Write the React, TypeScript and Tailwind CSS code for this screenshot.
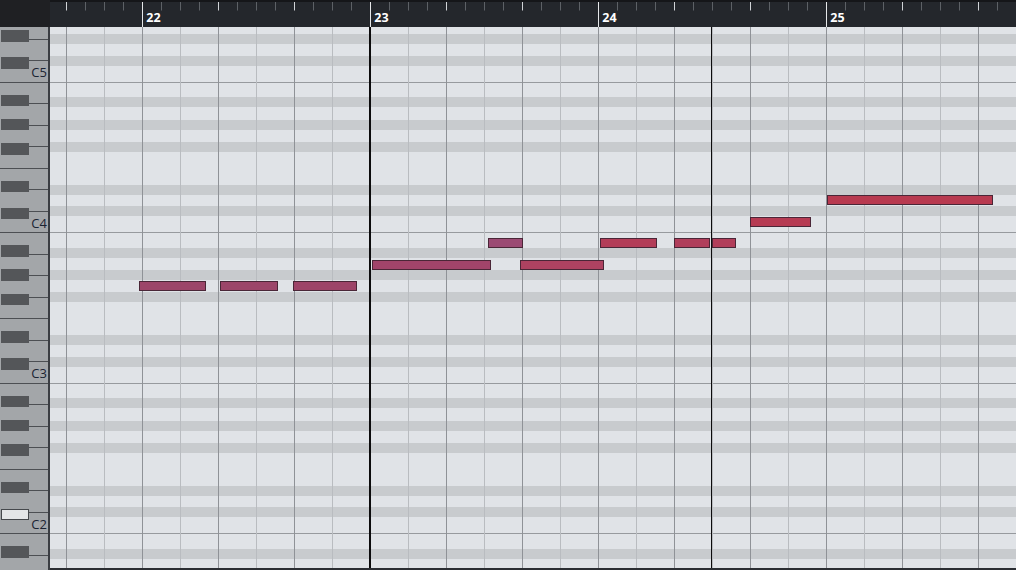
import React from 'react';
import clsx from 'clsx';

// piano roll: 5 octaves visible (C5 .. C1), one octave = 150.5px
const OCTAVES = [5, 4, 3, 2, 1];
const BARS = [21, 22, 23, 24, 25];

// grid rows of one octave, top (B) to bottom (C)
const gridRows = [
  { h: 'h-[14.5px]', dark: false }, // B
  { h: 'h-[10px]', dark: true }, // A#
  { h: 'h-[12.5px]', dark: false }, // A
  { h: 'h-[10px]', dark: true }, // G#
  { h: 'h-[12px]', dark: false }, // G
  { h: 'h-[10px]', dark: true }, // F#
  { h: 'h-[33px]', dark: false }, // F + E
  { h: 'h-[10px]', dark: true }, // D#
  { h: 'h-[11.5px]', dark: false }, // D
  { h: 'h-[10px]', dark: true }, // C#
  { h: 'h-[17px]', dark: false, line: true }, // C
];

// white keys top to bottom; full = the line under the key crosses the whole key
const whiteKeys = [
  { name: 'B', full: false },
  { name: 'A', full: false },
  { name: 'G', full: false },
  { name: 'F', full: true },
  { name: 'E', full: false },
  { name: 'D', full: false },
  { name: 'C', full: true },
];

const blackKeys = [
  { name: 'A#', top: 'top-[12px]' },
  { name: 'G#', top: 'top-[36px]' },
  { name: 'F#', top: 'top-[60.5px]' },
  { name: 'D#', top: 'top-[98px]' },
  { name: 'C#', top: 'top-[125px]' },
];

const notes = [
  { pos: 'top-[254px] left-[89px] w-[67px]', color: 'bg-[#9c4569]' },
  { pos: 'top-[254px] left-[170px] w-[58px]', color: 'bg-[#9c4569]' },
  { pos: 'top-[254px] left-[243px] w-[64px]', color: 'bg-[#9d4468]' },
  { pos: 'top-[233px] left-[322px] w-[119px]', color: 'bg-[#a1446a]' },
  { pos: 'top-[211px] left-[438px] w-[35px]', color: 'bg-[#9b4a73]' },
  { pos: 'top-[233px] left-[470px] w-[84px]', color: 'bg-[#ae4261]' },
  { pos: 'top-[211px] left-[550px] w-[57px]', color: 'bg-[#b33d58]' },
  { pos: 'top-[211px] left-[624px] w-[36px]', color: 'bg-[#b03e5b]' },
  { pos: 'top-[211px] left-[662px] w-[24px]', color: 'bg-[#b13e5a]' },
  { pos: 'top-[190px] left-[700px] w-[61px]', color: 'bg-[#b63b53]' },
  { pos: 'top-[168px] left-[777px] w-[166px]', color: 'bg-[#b83a50]' },
];

const BarTicks: React.FC = () => (
  <svg className="absolute inset-0" width={228} height={25}>
    {Array.from({ length: 12 }).map((_, j) => {
      const x = j * 19 + 0.5;
      if (j === 0) return <line key={j} x1={x} y1={0} x2={x} y2={25} stroke="#e6e8ea" strokeWidth={1} />;
      const beat = j % 4 === 0;
      return <line key={j} x1={x} y1={0} x2={x} y2={8.5} stroke={beat ? '#d0d3d6' : '#5d6166'} strokeWidth={1} />;
    })}
  </svg>
);

const Ruler: React.FC = () => (
  <div className="flex flex-1 overflow-hidden bg-[#24272c] border-t-2 border-[#151619]">
    {BARS.map((bar, i) => (
      <div key={bar} className={clsx('relative w-[228px] shrink-0 h-full', i === 0 && 'ml-[-135.7px]')}>
        <BarTicks />
        {i > 0 && (
          <span className="absolute left-[4px] top-[10px] text-[12.5px] leading-none font-bold text-white">{bar}</span>
        )}
      </div>
    ))}
  </div>
);

const KeyboardOctave: React.FC<{ octave: number }> = ({ octave }) => (
  <div className="relative flex flex-col h-[150.5px] shrink-0">
    {whiteKeys.map((k) => (
      <div key={k.name} className="flex h-[21.5px]">
        <div className={clsx('w-[29px]', k.full && 'border-b border-[#4c4f53]')} />
        <div className="flex-1 flex items-center justify-end pr-[1px] border-b border-[#4c4f53]">
          {k.name === 'C' && octave > 1 && (
            <span className="text-[13px] leading-none text-[#1b2433] mt-[2px]">C{octave}</span>
          )}
        </div>
      </div>
    ))}
    {blackKeys.map((b) => {
      const lit = octave === 2 && b.name === 'C#';
      return (
        <div
          key={b.name}
          className={clsx(
            'absolute left-[1px] w-[28px] h-[11.5px]',
            b.top,
            lit ? 'bg-[#e4e6e8] border border-[#45484c]' : 'bg-[#545659]'
          )}
        />
      );
    })}
  </div>
);

const GridOctave: React.FC = () => (
  <div className="flex flex-col h-[150.5px] shrink-0">
    {gridRows.map((r, i) => (
      <div
        key={i}
        className={clsx(r.h, r.dark ? 'bg-[#c8cbce]' : 'bg-[#e0e3e7]', r.line && 'border-b border-[#979a9e]')}
      />
    ))}
  </div>
);

const App: React.FC = () => {
  return (
    <div
      className="w-[1016px] h-[570px] flex flex-col overflow-hidden bg-[#1d1e21]"
      style={{ fontFamily: '"Open Sans", "Noto Sans", sans-serif' }}
    >
      <div className="flex h-[27px] shrink-0">
        <div className="w-[50px] bg-[#1f2023]" />
        <Ruler />
      </div>

      <div className="flex flex-1 min-h-0">
        {/* keyboard */}
        <div className="w-[50px] shrink-0 overflow-hidden bg-[#a3a6a9] border-r-2 border-[#3b3e43]">
          <div className="flex flex-col mt-[-94.7px]">
            {OCTAVES.map((o) => (
              <KeyboardOctave key={o} octave={o} />
            ))}
          </div>
        </div>

        {/* note grid */}
        <div className="flex-1 flex flex-col min-w-0">
          <div className="relative flex-1 overflow-hidden">
            <div className="flex flex-col mt-[-94.7px]">
              {OCTAVES.map((o) => (
                <GridOctave key={o} />
              ))}
            </div>

            <div className="absolute inset-0 flex">
              {BARS.map((bar, i) => (
                <div key={bar} className={clsx('flex w-[228px] shrink-0 h-full', i === 0 && 'ml-[-135.7px]')}>
                  {[0, 1, 2, 3, 4, 5].map((c) => (
                    <div
                      key={c}
                      className={clsx(
                        'w-[38px] shrink-0 h-full border-l',
                        c % 2 === 0 ? 'border-[#8f9297]' : 'border-[#b9bcc0]'
                      )}
                    />
                  ))}
                </div>
              ))}
            </div>

            {notes.map((n, i) => (
              <div key={i} className={clsx('absolute h-[10px] border border-[#4a2637]', n.pos, n.color)} />
            ))}

            <div className="absolute top-0 bottom-0 left-[319px] w-[2px] bg-[#0c0c0d]" />
            <div className="absolute top-0 bottom-0 left-[661px] w-px bg-[#0c0c0d]" />
          </div>
          <div className="h-[2px] shrink-0 bg-[#2b2e33]" />
        </div>
      </div>
    </div>
  );
};

export default App;
